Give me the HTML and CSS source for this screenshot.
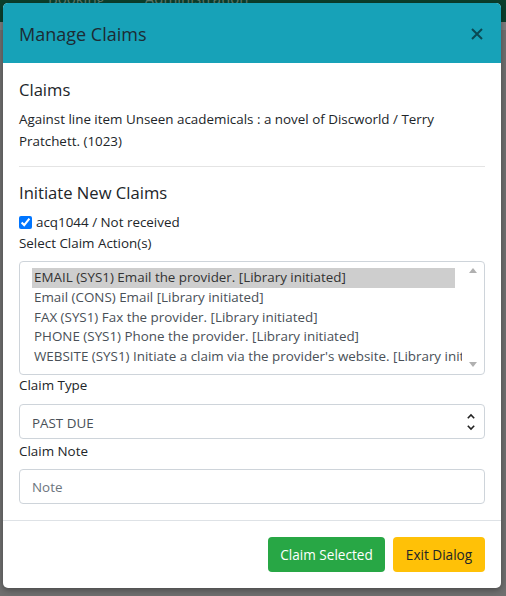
FILE: index.html
```html
<!DOCTYPE html>
<html>
<head>
<meta charset="utf-8">
<link rel="stylesheet" href="styles.css">
</head>
<body>
<div class="page">
  <div class="topnav"><span class="nav-item">Booking</span><span class="nav-item">Administration</span></div>
  <div class="page-rest"></div>
</div>
<div class="modal">
  <div class="modal-header">
    <h5 class="modal-title">Manage Claims</h5>
    <svg class="close" width="12" height="12" viewBox="0 0 12 12"><path d="M1 1 L11 11 M11 1 L1 11" stroke="#000" stroke-opacity="0.55" stroke-width="2" fill="none"/></svg>
  </div>
  <div class="modal-body">
    <h5 class="h5">Claims</h5>
    <p class="text">Against line item Unseen academicals : a novel of Discworld / Terry Pratchett. (1023)</p>
    <hr class="rule">
    <h5 class="h5">Initiate New Claims</h5>
    <label class="check-row"><input type="checkbox" checked class="check"> acq1044 / Not received</label>
    <div class="label">Select Claim Action(s)</div>
    <div class="listbox">
      <div class="list-clip">
        <div class="option selected">EMAIL (SYS1) Email the provider. [Library initiated]</div>
        <div class="option">Email (CONS) Email [Library initiated]</div>
        <div class="option">FAX (SYS1) Fax the provider. [Library initiated]</div>
        <div class="option">PHONE (SYS1) Phone the provider. [Library initiated]</div>
        <div class="option">WEBSITE (SYS1) Initiate a claim via the provider's website. [Library initiated]</div>
      </div>
      <div class="scrollbar">
        <svg width="8" height="5" viewBox="0 0 8 5"><path d="M0 5 L4 0 L8 5 Z" fill="#b0b0b0"/></svg>
        <svg width="8" height="5" viewBox="0 0 8 5"><path d="M0 0 L4 5 L8 0 Z" fill="#b0b0b0"/></svg>
      </div>
    </div>
    <div class="label label-gap">Claim Type</div>
    <div class="control select">
      <span>PAST DUE</span>
      <svg class="chevrons" width="10" height="20" viewBox="0 0 10 20"><path d="M1.8 6.2 L5 3 L8.2 6.2 M1.8 13.8 L5 17 L8.2 13.8" stroke="#222" stroke-width="1.6" fill="none"/></svg>
    </div>
    <div class="label label-gap2">Claim Note</div>
    <div class="control input"><span class="placeholder">Note</span></div>
  </div>
  <div class="modal-footer">
    <button class="btn btn-success">Claim Selected</button>
    <button class="btn btn-warning">Exit Dialog</button>
  </div>
</div>
</body>
</html>
```
FILE: styles.css
```css
* { box-sizing: border-box; }
html, body { margin: 0; padding: 0; }
body {
  width: 506px;
  height: 596px;
  overflow: hidden;
  background: #6e6e6e;
  font-family: "Open Sans", "Noto Sans", sans-serif;
  color: #212529;
  position: relative;
}
.page { display: flex; flex-direction: column; height: 596px; }
.topnav {
  height: 22px;
  background: #0b3f2d;
  display: flex;
  gap: 40px;
  padding-left: 48px;
  overflow: hidden;
}
.nav-item {
  color: #5f7a6e;
  font-size: 15px;
  line-height: 15px;
  margin-top: -9px;
}
.page-rest { flex: 1; background: #6f6f6f; border-top: 8px solid #7d7d7d; }

.modal {
  position: absolute;
  left: 3px;
  top: 3px;
  width: 498px;
  height: 585px;
  background: #fff;
  border-radius: 5px;
  overflow: hidden;
  display: flex;
  flex-direction: column;
  box-shadow: 0 2px 6px rgba(0,0,0,0.35);
}
.modal-header {
  background: #17a2b8;
  height: 60px;
  display: flex;
  align-items: center;
  justify-content: space-between;
  padding: 0 18px 0 16px;
}
.modal-title {
  margin: 0;
  font-size: 18px;
  font-weight: 500;
  color: #1d2b33;
  line-height: 27px;
  padding-top: 2px;
}
.close { display: block; margin-top: 2px; }

.modal-body {
  padding: 16px 16px 16px;
  display: flex;
  flex-direction: column;
  font-size: 13.4px;
}
.h5 {
  margin: 0 0 7px;
  font-size: 16.6px;
  font-weight: 500;
  line-height: 22px;
}
.text {
  margin: 0 0 14px;
  line-height: 22px;
}
.rule {
  margin: 0 0 15px;
  border: 0;
  border-top: 1px solid #e4e4e4;
}
.check-row {
  display: flex;
  align-items: center;
  gap: 4px;
  line-height: 22px;
  height: 22px;
}
.check { margin: 0; width: 13px; height: 13px; }
.label { line-height: 21px; margin-bottom: 7px; }
.label-gap { margin-top: 0; }
.label-gap2 { margin-top: 2px; }
.select { margin-top: 1px; }

.listbox {
  border: 1px solid #ced4da;
  border-radius: 4px;
  height: 114px;
  display: flex;
  padding: 6px 0 0 12px;
}
.list-clip {
  width: 430px;
  overflow: hidden;
  display: flex;
  flex-direction: column;
}
.option {
  width: 423px;
  height: 19.8px;
  line-height: 19.8px;
  white-space: nowrap;
  color: #495057;
  padding-left: 2px;
  flex-shrink: 0;
}
.option.selected { background: #cecece; color: #333; }
.scrollbar {
  flex: 1;
  display: flex;
  flex-direction: column;
  justify-content: space-between;
  align-items: center;
  padding: 1px 0 7px;
  margin-top: -1px;
}
.control {
  height: 35px;
  border: 1px solid #ced4da;
  border-radius: 4px;
  display: flex;
  align-items: center;
  justify-content: space-between;
  padding: 0 8px 0 12px;
}
.select span { color: #495057; padding-top: 2px; }
.chevrons { display: block; }
.placeholder { color: #6c757d; }

.modal-footer {
  border-top: 1px solid #dee2e6;
  flex: 1;
  display: flex;
  justify-content: flex-end;
  align-items: center;
  gap: 8px;
  padding: 0 16px;
}
.btn {
  font-family: inherit;
  font-size: 13.6px;
  height: 35px;
  border: 0;
  border-radius: 4px;
  padding: 0 12px;
  line-height: 35px;
}
.btn-success { background: #28a745; color: #fff; width: 117px; }
.btn-warning { background: #ffc107; color: #212529; width: 92px; }
```
